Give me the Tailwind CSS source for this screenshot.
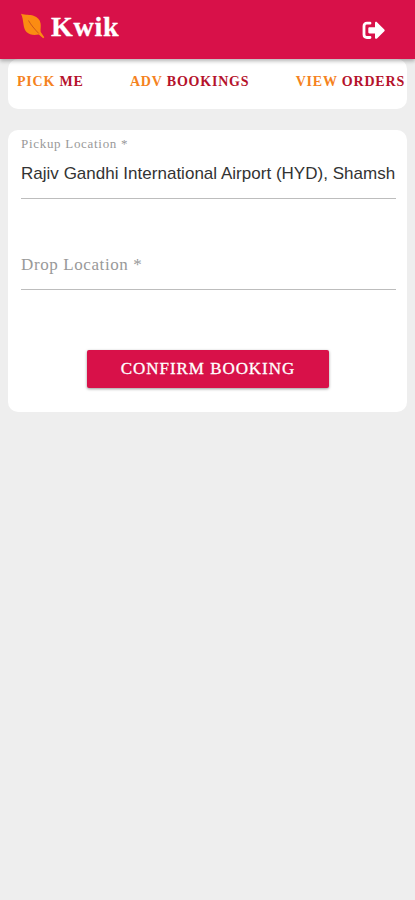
<!DOCTYPE html>
<html lang="en">
<head>
  <meta charset="UTF-8">
  <meta name="viewport" content="width=device-width, initial-scale=1">
  <title>Kwik</title>
  <script src="https://cdn.jsdelivr.net/npm/@tailwindcss/browser@4"></script>
</head>
<body class="min-h-screen bg-[#eeeeee] font-['Liberation_Serif',serif]">

  <header class="relative z-10 h-[59px] bg-[#d81149] flex items-center justify-between pl-[20px] pr-[30px] shadow-[0_2px_4px_rgba(0,0,0,0.3)]">
    <div class="flex items-center gap-[6px] text-white">
      <svg class="w-[25px] h-[27px] mb-[6px]" viewBox="0 0 25 27">
        <path fill="#fb8c12" d="M1 .8C6 2.500 9.500 1.300 13.500 2.700C17.500 4 20 6.500 20.600 10.500C21.100 13.500 20.300 16.500 20.700 19L24.300 24.300L23.200 25.200L18.800 21.500C13.500 22.500 9.500 21.800 6.500 19C2.500 15 4.200 7.500 1 .8Z"/>
        <path fill="none" stroke="#c8501c" stroke-width="0.9" d="M8.500 7.500C11 12 14.500 16 18.800 20.500"/>
      </svg>
      <h1 class="text-[28px] leading-8 font-bold tracking-[0.7px] mb-[5px] [-webkit-text-stroke:0.3px_white]">Kwik</h1>
    </div>
    <button aria-label="Log out" class="text-white mt-[2px]">
      <svg class="w-[23px] h-[19px]" viewBox="0 0 23 19">
        <path fill="none" stroke="currentColor" stroke-width="2.800" stroke-linecap="round" d="M8 2.200H5C3 2.200 2 3.200 2 5V13.500C2 15.500 3 16.500 5 16.500H8"/>
        <path fill="currentColor" d="M7.500 6.300H13V2C13 .8 14.300 .5 15 1.200L22.300 8.500C22.800 9 22.800 9.800 22.300 10.300L15 17.500C14.300 18.200 13 17.800 13 16.800V12.500H7.500C6.800 12.500 6.300 12 6.300 11.300V7.500C6.300 6.800 6.800 6.300 7.500 6.300Z"/>
      </svg>
    </button>
  </header>

  <nav class="mx-2 h-[50px] bg-white rounded-[10px] flex justify-between pl-[9px] pr-[2px] pt-[15px] text-[14px] leading-4 font-bold tracking-[0.8px] text-[#b5122b] whitespace-nowrap">
    <a href="#"><span class="text-[#f58220]">PICK</span> ME</a>
    <a href="#"><span class="text-[#f58220]">ADV</span> BOOKINGS</a>
    <a href="#"><span class="text-[#f58220]">VIEW</span> ORDERS</a>
  </nav>

  <form class="mx-2 mt-[21px] h-[282px] bg-white rounded-[10px] px-[13px] pt-[6px] flex flex-col">
    <label for="pickup" class="text-[13px] leading-4 tracking-[0.7px] text-[#999999]">Pickup Location *</label>
    <input id="pickup" type="text" value="Rajiv Gandhi International Airport (HYD), Shamsh"
      class="w-[375px] h-[47px] pb-[3px] text-[17px] tracking-[0.02px] text-[#333333] font-['Liberation_Sans',sans-serif] border-b border-[#bdbdbd] outline-none">
    <label for="drop" class="mt-[56px] w-[375px] h-[35px] border-b border-[#bdbdbd] text-[17px] leading-5 tracking-[0.6px] text-[#999999]">Drop Location *</label>
    <button type="button"
      class="mt-[60px] ml-[66px] w-[242px] h-[38px] bg-[#d81149] text-white text-[17px] tracking-[0.95px] rounded-[2px] shadow-[0_1px_3px_rgba(0,0,0,0.4)] [-webkit-text-stroke:0.3px_white]">
      CONFIRM BOOKING
    </button>
  </form>

</body>
</html>
